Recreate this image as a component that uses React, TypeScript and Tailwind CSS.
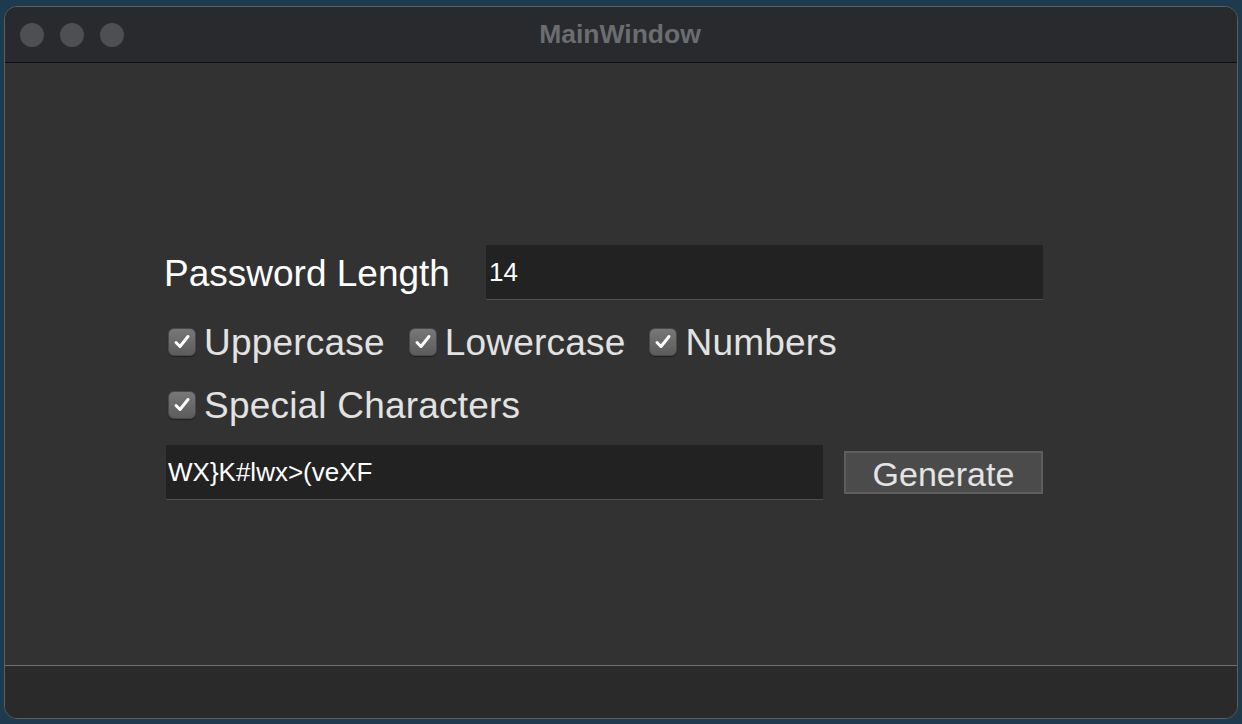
import React from "react";

function Check({ label }: { label: string }) {
  return (
    <div className="flex items-center">
      <div className="w-[28px] h-[28px] rounded-[6px] bg-gradient-to-b from-[#787878] to-[#5c5c5c] border border-[#4a4a4a] flex items-center justify-center shadow-[0_1px_1px_rgba(0,0,0,0.4)]">
        <svg width="22" height="22" viewBox="0 0 22 22">
          <path d="M5 11.5 L9 15.5 L17 5.5" fill="none" stroke="#ffffff" strokeWidth="3" strokeLinecap="round" strokeLinejoin="round" />
        </svg>
      </div>
      <span className="ml-[8px] text-[37px] leading-none text-[#e2e2e2] tracking-[0.2px]">{label}</span>
    </div>
  );
}

const PASSWORD = "WX}K#lwx>(veXF";

export default function App() {
  return (
    <div
      className="w-[1242px] h-[724px] bg-[#1d3a4f] pt-[6px] pl-[4px] overflow-hidden"
      style={{ fontFamily: '"Liberation Sans", Arial, sans-serif' }}
    >
      <div className="w-[1234px] h-[713px] rounded-[13px] border border-[#5c5e60] overflow-hidden flex flex-col bg-[#323232]">
        <div className="relative h-[56px] bg-[#282a2d] border-b border-[#0e0e0e] flex items-center shrink-0">
          <div className="flex gap-[16px] pl-[15px] pt-[1px]">
            <div className="w-[24px] h-[24px] rounded-full bg-[#4d4f52]" />
            <div className="w-[24px] h-[24px] rounded-full bg-[#4d4f52]" />
            <div className="w-[24px] h-[24px] rounded-full bg-[#4d4f52]" />
          </div>
          <div className="absolute inset-0 flex items-center justify-center">
            <span className="text-[26.5px] font-bold text-[#6b6d70] pr-[2px] pt-[1px]">MainWindow</span>
          </div>
        </div>
        <div className="flex-1 flex flex-col pl-[159px] pt-[182px]">
          <div className="flex items-center h-[55px]">
            <div className="w-[322px] text-[37px] leading-none text-white pt-[2px]">Password Length</div>
            <div className="w-[557px] h-[55px] bg-[#222222] border-b border-[#4f4f4f] flex items-center pl-[3px]">
              <span className="text-[26px] text-white">14</span>
            </div>
          </div>
          <div className="flex items-center h-[56px] mt-[14px] pl-[4px] gap-[24px]">
            <Check label="Uppercase" />
            <Check label="Lowercase" />
            <Check label="Numbers" />
          </div>
          <div className="flex items-center h-[50px] mt-[10px] pl-[4px]">
            <Check label="Special Characters" />
          </div>
          <div className="flex items-center mt-[15px] pl-[2px]">
            <div className="w-[657px] h-[55px] bg-[#222222] border-b border-[#4f4f4f] flex items-center pl-[2px]">
              <span className="text-[26px] text-white">{PASSWORD}</span>
            </div>
            <div className="ml-[21px] w-[199px] h-[43px] bg-[#4b4b4b] border-2 border-[#5e5e5e] flex items-center justify-center">
              <span className="text-[34px] leading-none text-[#e4e4e4] pt-[2px]">Generate</span>
            </div>
          </div>
        </div>
        <div className="h-[53px] shrink-0 bg-[#2a2a2a] border-t border-[#6e6e6e]" />
      </div>
    </div>
  );
}
